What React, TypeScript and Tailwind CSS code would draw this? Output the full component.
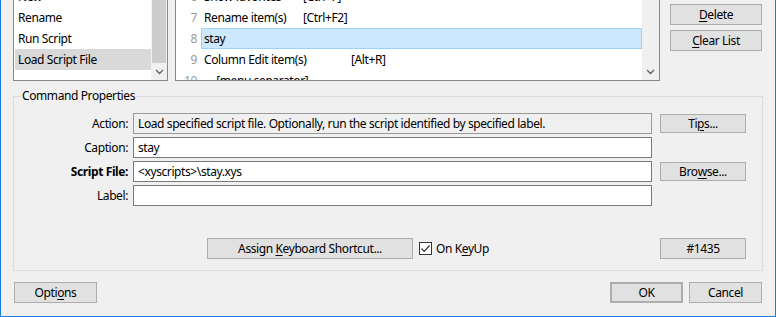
import type { ReactNode } from "react";

const Chevron = () => (
  <svg width="9" height="6" viewBox="0 0 9 6" className="text-[#606060]">
    <path d="M1 1 L4.5 4.5 L8 1" fill="none" stroke="currentColor" strokeWidth="1.3" />
  </svg>
);

function Btn({ children, className = "" }: { children: ReactNode; className?: string }) {
  return (
    <div
      className={
        "flex items-center justify-center bg-[#e1e1e1] border border-[#adadad] " + className
      }
    >
      {children}
    </div>
  );
}

// underlined mnemonic letter
const U = ({ children }: { children: ReactNode }) => (
  <span className="underline underline-offset-[2px] decoration-1">{children}</span>
);

const leftItems = ["New", "Rename", "Run Script", "Load Script File"];

const rows = [
  { n: 6, a: "Show favorites", b: "[Ctrl+F]", w: "w-[99px]" },
  { n: 7, a: "Rename item(s)", b: "[Ctrl+F2]", w: "w-[99px]" },
  { n: 8, a: "stay", b: "", w: "" },
  { n: 9, a: "Column Edit item(s)", b: "[Alt+R]", w: "w-[147px]" },
  { n: 10, a: "- [menu separator] -", b: "", w: "" },
];

export default function App() {
  return (
    <div className="w-[776px] h-[317px] bg-[#f0f0f0] border-x border-b border-[#1b7fd8] pl-[12px] flex flex-col overflow-hidden text-[12px] leading-[16px] tracking-[-0.4px] text-black font-['Noto_Sans',sans-serif]">
      {/* Top lists + buttons */}
      <div className="flex h-[81px] shrink-0">
        {/* command list */}
        <div className="w-[155px] h-full flex border-x border-b border-[#828790] bg-white overflow-hidden">
          <div className="flex-1 flex flex-col pl-px -mt-[14px]">
            {leftItems.map((it, i) => (
              <div
                key={it}
                className={
                  "h-[21px] shrink-0 flex items-center pl-[3px] " +
                  (i === 3 ? "bg-[#d9d9d9]" : "")
                }
              >
                {it}
              </div>
            ))}
          </div>
          <div className="w-[16px] bg-[#f0f0f0] flex flex-col">
            <div className="flex-1 mx-px bg-[#cdcdcd]" />
            <div className="h-[17px] flex items-center justify-center">
              <Chevron />
            </div>
          </div>
        </div>

        {/* script lines */}
        <div className="ml-[7px] w-[485px] h-full flex border-x border-b border-[#828790] bg-white overflow-hidden">
          <div className="flex-1 flex flex-col -mt-[14px]">
            {rows.map((r) => (
              <div key={r.n} className="h-[21px] shrink-0 flex">
                <div className="w-[25px] shrink-0 text-right pr-[4px] text-[#9a9a9a] flex items-center justify-end">
                  {r.n}
                </div>
                <div
                  className={
                    "flex-1 flex items-center pl-[2px] border " +
                    (r.n === 8 ? "bg-[#cce8ff] border-[#99d1ff]" : "border-transparent")
                  }
                >
                  <span className={r.n === 10 ? "pl-[6px]" : ""}>
                    <span className={"inline-block " + r.w}>{r.a}</span>
                    {r.b}
                  </span>
                </div>
              </div>
            ))}
          </div>
          <div className="w-[17px] bg-[#f0f0f0] flex flex-col justify-end">
            <div className="h-[17px] flex items-center justify-center">
              <Chevron />
            </div>
          </div>
        </div>

        <div className="ml-[10px] w-[92px] flex flex-col pt-[4px] gap-[5px]">
          <Btn className="h-[21px]">
            <U>D</U>elete
          </Btn>
          <Btn className="h-[21px]">
            <U>C</U>lear List
          </Btn>
        </div>
      </div>

      {/* Command Properties */}
      <fieldset className="mt-[7px] w-[750px] h-[183px] shrink-0 border border-[#dcdcdc]">
        <legend className="ml-[7px] px-px">Command Properties</legend>
        <div className="pt-[9px] grid grid-cols-[114px_519px_89px] gap-x-[5px] gap-y-[3px]">
          <div className="h-[21px] flex items-center justify-end">Action:</div>
          <div className="h-[21px] flex items-center px-[4px] border border-[#9a9a9a] bg-[#f0f0f0] whitespace-nowrap overflow-hidden">
            Load specified script file. Optionally, run the script identified by specified label.
          </div>
          <Btn className="ml-[3px] h-[19px] self-center">
            Ti<U>p</U>s...
          </Btn>

          <div className="h-[21px] flex items-center justify-end">Caption:</div>
          <div className="h-[21px] flex items-center px-[4px] border border-[#7a7a7a] bg-white">stay</div>
          <div />

          <div className="h-[21px] flex items-center justify-end font-bold">Script File:</div>
          <div className="h-[21px] flex items-center px-[4px] border border-[#7a7a7a] bg-white">
            &lt;xyscripts&gt;\stay.xys
          </div>
          <Btn className="ml-[3px] h-[19px] self-center">
            Bro<U>w</U>se...
          </Btn>

          <div className="h-[21px] flex items-center justify-end">Label:</div>
          <div className="h-[21px] border border-[#7a7a7a] bg-white" />
          <div />

          <div className="mt-[29px]" />
          <div className="mt-[29px] h-[21px] flex items-center">
            <Btn className="ml-[74px] w-[206px] h-[21px]">
              Assign&nbsp;<U>K</U>eyboard Shortcut...
            </Btn>
            <div className="ml-[6px] w-[13px] h-[13px] border border-[#333333] bg-white flex items-center justify-center">
              <svg width="11" height="11" viewBox="0 0 11 11">
                <path d="M1.5 5.5 L4.2 8.3 L9.5 2.5" fill="none" stroke="#333333" strokeWidth="1.2" />
              </svg>
            </div>
            <span className="ml-[4px]">
              On K<U>e</U>yUp
            </span>
          </div>
          <Btn className="mt-[29px] ml-[3px] h-[21px]">#1435</Btn>
        </div>
      </fieldset>

      {/* Dialog buttons */}
      <div className="mt-[11px] flex items-center">
        <Btn className="ml-px w-[83px] h-[21px]">
          Opti<U>o</U>ns
        </Btn>
        <div className="flex-1" />
        <Btn className="w-[73px] h-[21px] border-2 border-[#0078d7]">OK</Btn>
        <Btn className="ml-[6px] w-[73px] h-[21px] mr-[13px]">Cancel</Btn>
      </div>
    </div>
  );
}
